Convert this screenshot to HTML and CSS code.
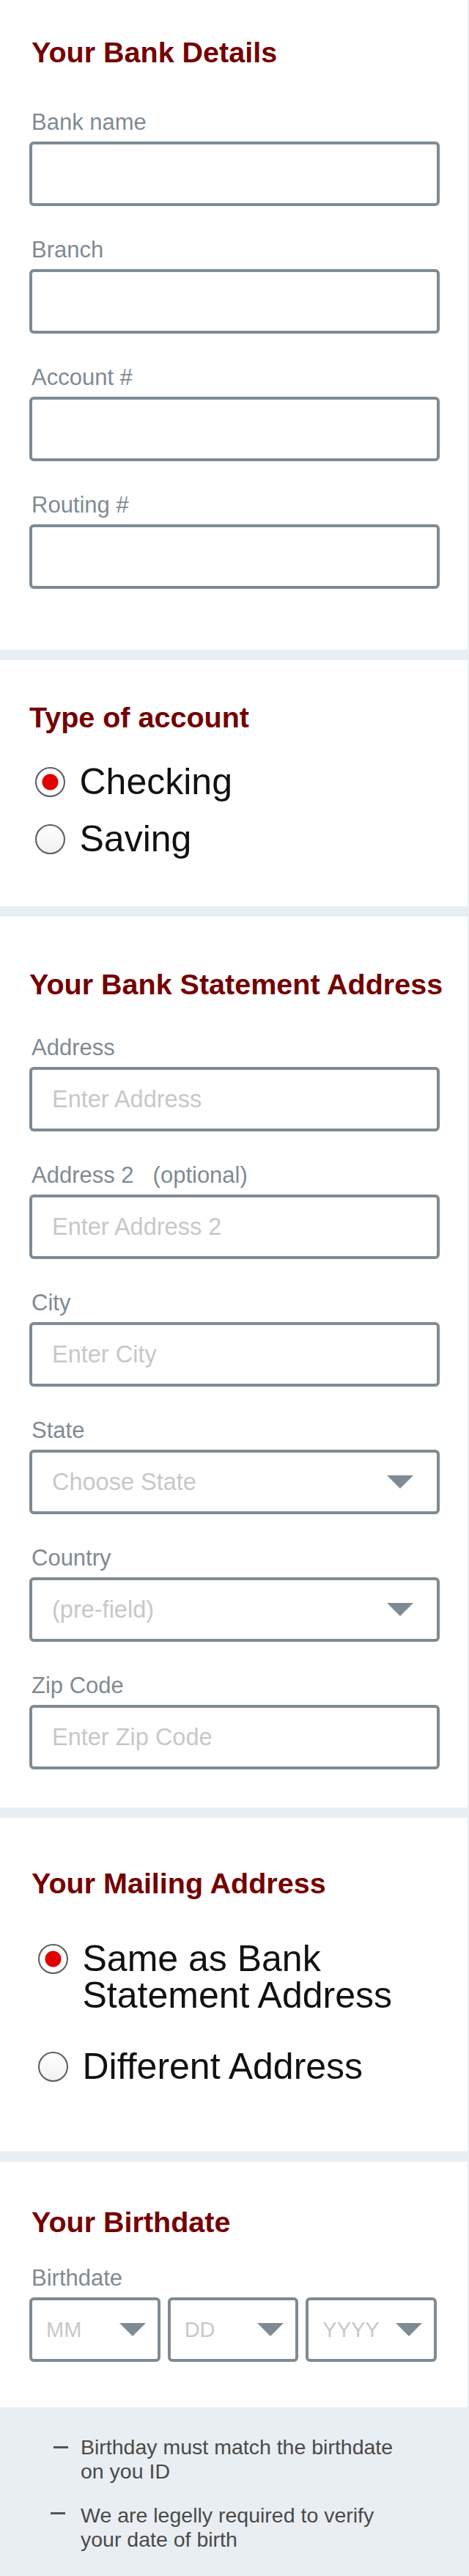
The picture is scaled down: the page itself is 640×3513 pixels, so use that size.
FILE: index.html
```html
<!DOCTYPE html>
<html lang="en">
<head>
<meta charset="utf-8">
<title>Bank Details</title>
<link rel="stylesheet" href="styles.css">
</head>
<body>
<main class="form">
  <section class="card card--bank">
    <h2 class="card__title card__title--indent">Your Bank Details</h2>
    <div class="fields">
      <div class="field">
        <label class="field__label">Bank name</label>
        <input class="field__input" type="text">
      </div>
      <div class="field">
        <label class="field__label">Branch</label>
        <input class="field__input" type="text">
      </div>
      <div class="field">
        <label class="field__label">Account #</label>
        <input class="field__input" type="text">
      </div>
      <div class="field">
        <label class="field__label">Routing #</label>
        <input class="field__input" type="text">
      </div>
    </div>
  </section>

  <section class="card card--type">
    <h2 class="card__title">Type of account</h2>
    <div class="choices choices--type">
      <label class="choice"><input class="choice__radio" type="radio" name="acct" checked><span class="choice__text">Checking</span></label>
      <label class="choice"><input class="choice__radio" type="radio" name="acct"><span class="choice__text">Saving</span></label>
    </div>
  </section>

  <section class="card card--stmt">
    <h2 class="card__title">Your Bank Statement Address</h2>
    <div class="fields">
      <div class="field">
        <label class="field__label">Address</label>
        <input class="field__input" type="text" placeholder="Enter Address">
      </div>
      <div class="field">
        <label class="field__label">Address 2<span class="field__opt">(optional)</span></label>
        <input class="field__input" type="text" placeholder="Enter Address 2">
      </div>
      <div class="field">
        <label class="field__label">City</label>
        <input class="field__input" type="text" placeholder="Enter City">
      </div>
      <div class="field">
        <label class="field__label">State</label>
        <div class="select">
          <span class="select__text">Choose State</span>
          <svg class="caret" viewBox="0 0 36 18" width="36" height="18"><path d="M0 0H36L18 18Z" fill="#7f8b93"/></svg>
        </div>
      </div>
      <div class="field">
        <label class="field__label">Country</label>
        <div class="select">
          <span class="select__text">(pre-field)</span>
          <svg class="caret" viewBox="0 0 36 18" width="36" height="18"><path d="M0 0H36L18 18Z" fill="#7f8b93"/></svg>
        </div>
      </div>
      <div class="field">
        <label class="field__label">Zip Code</label>
        <input class="field__input" type="text" placeholder="Enter Zip Code">
      </div>
    </div>
  </section>

  <section class="card card--mail">
    <h2 class="card__title card__title--indent">Your Mailing Address</h2>
    <div class="choices choices--mail">
      <label class="choice"><input class="choice__radio" type="radio" name="mail" checked><span class="choice__text">Same as Bank Statement Address</span></label>
      <label class="choice"><input class="choice__radio" type="radio" name="mail"><span class="choice__text">Different Address</span></label>
    </div>
  </section>

  <section class="card card--birth">
    <h2 class="card__title card__title--indent">Your Birthdate</h2>
    <div class="field">
      <label class="field__label">Birthdate</label>
      <div class="dates">
        <div class="select select--date">
          <span class="select__text select__text--date">MM</span>
          <svg class="caret" viewBox="0 0 36 18" width="36" height="18"><path d="M0 0H36L18 18Z" fill="#7f8b93"/></svg>
        </div>
        <div class="select select--date">
          <span class="select__text select__text--date">DD</span>
          <svg class="caret" viewBox="0 0 36 18" width="36" height="18"><path d="M0 0H36L18 18Z" fill="#7f8b93"/></svg>
        </div>
        <div class="select select--date">
          <span class="select__text select__text--date">YYYY</span>
          <svg class="caret" viewBox="0 0 36 18" width="36" height="18"><path d="M0 0H36L18 18Z" fill="#7f8b93"/></svg>
        </div>
      </div>
    </div>
  </section>

  <aside class="notes">
    <ul class="notes__list">
      <li class="note"><span class="note__dash"></span><span class="note__text">Birthday must match the birthdate on you ID</span></li>
      <li class="note"><span class="note__dash note__dash--shift"></span><span class="note__text">We are legelly required to verify your date of birth</span></li>
    </ul>
  </aside>
</main>
</body>
</html>
```

FILE: styles.css
```css
html, body {
  margin: 0;
  padding: 0;
  background: #e9eef2;
}

body {
  width: 640px;
  font-family: "Liberation Sans", Arial, Helvetica, sans-serif;
}

.form {
  display: flex;
  flex-direction: column;
}

.card {
  background: #ffffff;
  margin: 0 2px 14px 0;
  padding: 0 38px 0 40px;
}

.card--bank { padding-top: 48px; padding-bottom: 83px; }
.card--type { padding-top: 55px; padding-bottom: 67px; }
.card--stmt { padding-top: 69px; padding-bottom: 52px; }
.card--mail { padding-top: 66px; padding-bottom: 91px; }
.card--birth { padding-top: 59px; padding-bottom: 62px; margin-bottom: 0; }

.card__title {
  margin: 0;
  font-size: 39.5px;
  line-height: 46px;
  font-weight: bold;
  color: #750000;
  white-space: nowrap;
}

.card__title--indent { margin-left: 3px; }

.card--bank .card__title { margin-bottom: 55px; }
.card--type .card__title { margin-bottom: 40px; }
.card--stmt .card__title { margin-bottom: 46px; }
.card--mail .card__title { margin-bottom: 55px; }
.card--birth .card__title { margin-bottom: 36px; }

.fields {
  display: flex;
  flex-direction: column;
  gap: 42px;
}

.field {
  display: flex;
  flex-direction: column;
}

.field__label {
  display: block;
  font-size: 31px;
  line-height: 36px;
  color: #7f8b93;
  padding-left: 3px;
  margin-bottom: 8px;
  white-space: nowrap;
}

.field__opt { margin-left: 26px; }

.field__input {
  display: block;
  box-sizing: border-box;
  width: 100%;
  height: 88px;
  margin: 0;
  border: 4px solid #7f8b93;
  border-radius: 6px;
  padding: 0 27px;
  background: #ffffff;
  font-family: "Liberation Sans", Arial, sans-serif;
  font-size: 32.5px;
  color: #333333;
  outline: none;
}

.field__input::placeholder {
  color: #c8c8c8;
  opacity: 1;
}

.select {
  box-sizing: border-box;
  height: 88px;
  border: 4px solid #7f8b93;
  border-radius: 6px;
  padding: 0 32px 0 27px;
  display: flex;
  align-items: center;
  justify-content: space-between;
  background: #ffffff;
}

.select__text {
  font-size: 32.5px;
  color: #c8c8c8;
  white-space: nowrap;
}

.select--date {
  padding: 0 16px 0 19px;
}

.select__text--date {
  font-size: 29px;
}

.caret {
  display: block;
  flex: none;
}

.dates {
  width: 556px;
  display: grid;
  grid-template-columns: repeat(3, 1fr);
  gap: 10px;
}

.choices {
  display: flex;
  flex-direction: column;
}

.choices--type { padding-left: 8px; gap: 28px; }
.choices--mail { padding-left: 12px; gap: 47px; }

.choice {
  display: flex;
  align-items: flex-start;
}

.choice__radio {
  -webkit-appearance: none;
  appearance: none;
  box-sizing: border-box;
  flex: none;
  width: 41px;
  height: 41px;
  margin: 4.5px 19.5px 0 0;
  border: 2px solid #5c5c5c;
  border-radius: 50%;
  background: linear-gradient(#ffffff, #f1f1f1);
  box-shadow: inset 0 1px 2px rgba(0, 0, 0, 0.08);
}

.choice__radio:checked {
  background: radial-gradient(circle at center, #e00000 0, #e00000 10.5px, #ffffff 11.5px);
}

.choice__text {
  font-size: 50px;
  line-height: 50px;
  color: #111111;
}

.notes {
  padding: 38px 40px 33px 73px;
}

.notes__list {
  list-style: none;
  margin: 0;
  padding: 0;
  display: flex;
  flex-direction: column;
  gap: 27px;
}

.note {
  display: flex;
  align-items: flex-start;
}

.note__dash {
  flex: none;
  width: 20px;
  height: 3px;
  background: #555555;
  margin: 14.7px 17px 0 0;
}

.note__dash--shift {
  margin-left: -4px;
  margin-right: 21px;
  margin-top: 12px;
}

.note__text {
  width: 440px;
  font-size: 28.5px;
  line-height: 33px;
  color: #4a4a4a;
}
```
